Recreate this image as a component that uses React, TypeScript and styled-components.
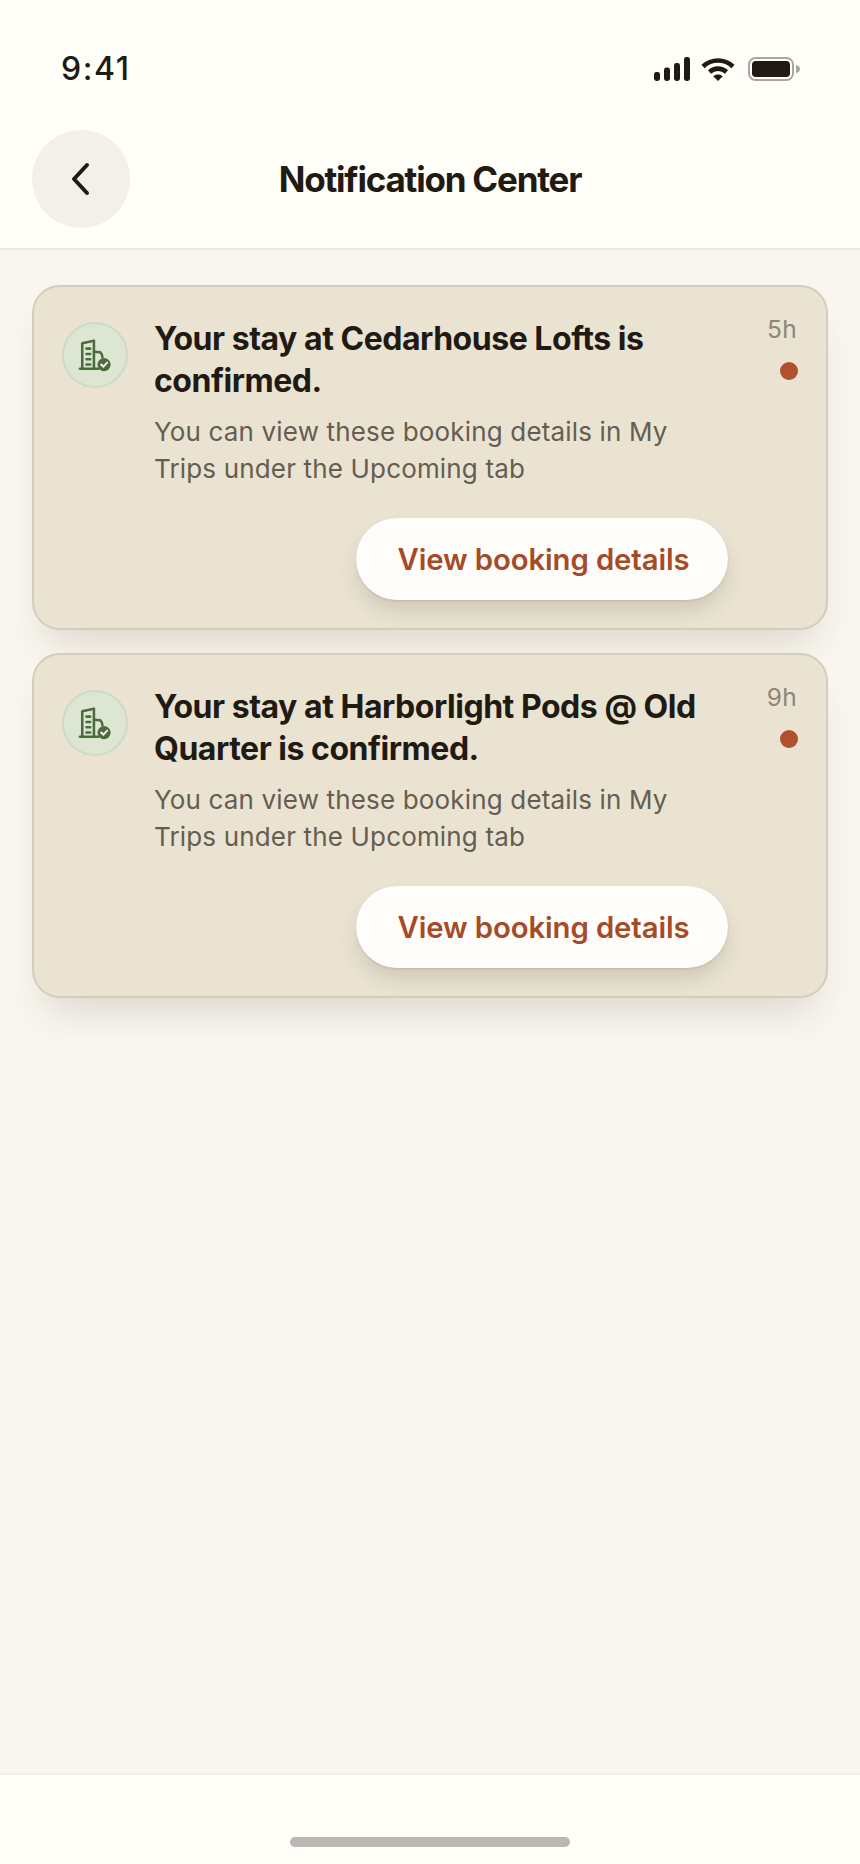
import React from "react";
import styled, { createGlobalStyle } from "styled-components";

const Global = createGlobalStyle`
  html, body { margin: 0; padding: 0; background: #f9f6ef; }
  body { font-family: Inter, "Noto Sans", sans-serif; }
  * { box-sizing: border-box; }
`;

const Page = styled.div`
  width: 860px;
  height: 1864px;
  display: flex;
  flex-direction: column;
  background: #f9f6ef;
  color: #211a12;
`;

const StatusBar = styled.div`
  height: 130px;
  flex: none;
  display: flex;
  align-items: flex-start;
  justify-content: space-between;
  padding: 49px 60px 0 61px;
  background: #fffef9;
`;

const Clock = styled.span`
  font-size: 32px;
  line-height: 39px;
  font-weight: 500;
  letter-spacing: 1.6px;
`;

const StatusIcons = styled.div`
  display: flex;
  align-items: center;
  gap: 11px;
  margin-top: 8px;
`;

const BatteryWrap = styled.span`
  display: flex;
  margin-left: 2px;
`;

const Header = styled.header`
  height: 120px;
  flex: none;
  display: flex;
  align-items: flex-start;
  position: relative;
  padding: 0 32px;
  background: #fffef9;
  border-bottom: 2px solid #ebe8e1;
`;

const BackButton = styled.button`
  width: 98px;
  height: 98px;
  border: 0;
  padding: 0 0 0 2px;
  border-radius: 50%;
  background: #f2f0e9;
  color: #211a12;
  display: flex;
  align-items: center;
  justify-content: center;
`;

const Title = styled.h1`
  margin: 0;
  position: absolute;
  left: 0;
  right: 0;
  top: 27px;
  text-align: center;
  font-size: 35px;
  line-height: 44px;
  font-weight: 700;
  letter-spacing: -1.2px;
`;

const List = styled.main`
  flex: 1;
  display: flex;
  flex-direction: column;
  gap: 23px;
  padding: 35px 32px 0;
`;

const Card = styled.article`
  height: 345px;
  flex: none;
  display: flex;
  padding: 35px 29px 0 28px;
  background: #eae3d2;
  border: 2px solid #d4cdbc;
  border-radius: 28px;
  box-shadow: 0 26px 36px -14px rgba(70, 55, 30, 0.16);
`;

const IconBadge = styled.div`
  width: 66px;
  height: 66px;
  flex: none;
  border-radius: 50%;
  background: #dde6d3;
  border: 2px solid #cfd9c5;
  color: #4c6b3f;
  display: flex;
  align-items: center;
  justify-content: center;
`;

const Content = styled.div`
  flex: 1;
  min-width: 0;
  margin-left: 26px;
  display: flex;
  flex-direction: column;
`;

const CardTitle = styled.h2`
  margin: -4px 0 0;
  font-size: 32px;
  line-height: 42px;
  font-weight: 700;
  letter-spacing: -0.47px;
  color: #211a12;
`;

const CardBody = styled.p`
  margin: 12px 0 0;
  font-size: 26px;
  line-height: 36.5px;
  font-weight: 400;
  letter-spacing: 0.16px;
  color: #655d51;
`;

const ActionRow = styled.div`
  display: flex;
  justify-content: flex-end;
  margin-top: 31px;
  margin-right: 3px;
`;

const ActionButton = styled.button`
  width: 372px;
  height: 82px;
  padding: 0 0 0 3px;
  border: 0;
  border-radius: 41px;
  background: #fffdfa;
  color: #a64b28;
  font-family: inherit;
  font-size: 29.3px;
  font-weight: 600;
  letter-spacing: -0.1px;
  box-shadow: 0 12px 20px -2px rgba(70, 55, 30, 0.16), 0 1px 2px rgba(70, 55, 30, 0.14);
`;

const Meta = styled.div`
  width: 66px;
  flex: none;
  display: flex;
  flex-direction: column;
  align-items: flex-end;
  margin-top: -7px;
`;

const Time = styled.span`
  font-size: 24.5px;
  line-height: 28px;
  letter-spacing: 0.3px;
  color: #8d8678;
`;

const Dot = styled.span`
  width: 18px;
  height: 18px;
  margin-top: 19px;
  margin-right: -1px;
  border-radius: 50%;
  background: #b0502c;
`;

const Footer = styled.footer`
  height: 91px;
  flex: none;
  display: flex;
  justify-content: center;
  padding-top: 62px;
  background: #fffef9;
  border-top: 2px solid #f2efe9;
`;

const HomeBar = styled.div`
  width: 280px;
  height: 10px;
  border-radius: 5px;
  background: #b9b8b3;
`;

const Signal = () => (
  <svg width="36" height="24" viewBox="0 0 36 24" fill="currentColor">
    <rect x="0" y="15" width="6" height="9" rx="2.4" />
    <rect x="10" y="10.5" width="6" height="13.5" rx="2.4" />
    <rect x="20" y="6" width="6" height="18" rx="2.4" />
    <rect x="30" y="0" width="6" height="24" rx="2.4" />
  </svg>
);

const Wifi = () => (
  <svg width="34" height="24" viewBox="0 0 34 24" fill="none" stroke="currentColor" strokeWidth="4.6">
    <path d="M2 9.5 C10.5 1.5 23.5 1.5 32 9.5" />
    <path d="M8.5 15 C13.5 10.5 20.5 10.5 25.5 15" />
    <path d="M17 24 L12.2 19.2 C15 17 19 17 21.8 19.2 Z" fill="currentColor" stroke="none" />
  </svg>
);

const Battery = () => (
  <svg width="52" height="24" viewBox="0 0 52 24">
    <rect x="1" y="1" width="44" height="22" rx="6.5" fill="none" stroke="#a9a7a2" strokeWidth="2" />
    <rect x="4" y="4" width="38" height="16" rx="3.8" fill="#211a12" />
    <path d="M48 8 C50.5 8.6 52 10 52 12 C52 14 50.5 15.4 48 16 Z" fill="#a9a7a2" />
  </svg>
);

const Chevron = () => (
  <svg width="32" height="36" viewBox="0 0 32 36" fill="none" stroke="currentColor" strokeWidth="4" strokeLinecap="round" strokeLinejoin="round">
    <path d="M21 4 L8 18 L21 32" />
  </svg>
);

const BuildingCheck = () => (
  <svg width="34" height="34" viewBox="0 0 32 32" fill="none" stroke="currentColor" strokeWidth="2.4" strokeLinecap="round" strokeLinejoin="round">
    <path d="M4 28.5 V5 L15 2.5 V28.5" />
    <path d="M1.8 29 H19" />
    <path d="M15 13 L21 13.5 C22.5 15 23 16.5 23 18" />
    <path d="M8 10 H11.5 M8 15 H11.5 M8 20 H11.5 M8 25 H11.5" />
    <circle cx="24.5" cy="25" r="6.2" fill="currentColor" stroke="none" />
    <path d="M21.8 25 L23.9 27 L27.4 23.2" stroke="#eef2e6" strokeWidth="1.9" />
  </svg>
);

const notifications = [
  { id: 1, title: "Your stay at Cedarhouse Lofts is confirmed.", time: "5h" },
  { id: 2, title: "Your stay at Harborlight Pods @ Old Quarter is confirmed.", time: "9h" },
];

export default function App() {
  return (
    <Page>
      <Global />
      <StatusBar>
        <Clock>9:41</Clock>
        <StatusIcons>
          <Signal />
          <Wifi />
          <BatteryWrap>
            <Battery />
          </BatteryWrap>
        </StatusIcons>
      </StatusBar>
      <Header>
        <BackButton aria-label="Back">
          <Chevron />
        </BackButton>
        <Title>Notification Center</Title>
      </Header>
      <List>
        {notifications.map((n) => (
          <Card key={n.id}>
            <IconBadge>
              <BuildingCheck />
            </IconBadge>
            <Content>
              <CardTitle>{n.title}</CardTitle>
              <CardBody>You can view these booking details in My Trips under the Upcoming tab</CardBody>
              <ActionRow>
                <ActionButton>View booking details</ActionButton>
              </ActionRow>
            </Content>
            <Meta>
              <Time>{n.time}</Time>
              <Dot />
            </Meta>
          </Card>
        ))}
      </List>
      <Footer>
        <HomeBar />
      </Footer>
    </Page>
  );
}
